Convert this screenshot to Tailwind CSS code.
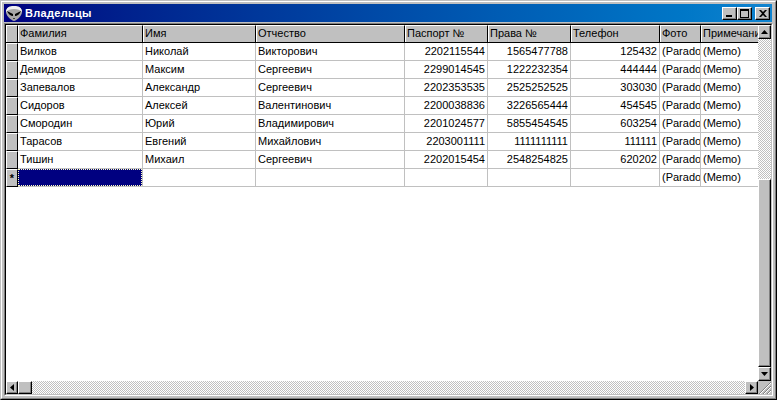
<!DOCTYPE html>
<html lang="ru">
<head>
  <meta charset="UTF-8"/>
  <title>Владельцы</title>
  <script src="https://cdn.jsdelivr.net/npm/@tailwindcss/browser@4"></script>
</head>
<body class="w-[777px] h-[400px] overflow-hidden bg-[#c0c0c0] font-['Liberation_Sans',sans-serif] text-[11px] leading-none text-black">
  <!-- window -->
  <div class="w-[777px] h-[400px] flex flex-col border border-t-[#c0c0c0] border-l-[#c0c0c0] border-r-black border-b-black">
    <div class="flex-1 min-h-0 flex flex-col border border-t-white border-l-white border-r-[#808080] border-b-[#808080] p-[2px]">
      <!-- title bar -->
      <div class="h-[18px] shrink-0 mr-[1px] flex items-center pl-[2px] pr-[2px] bg-gradient-to-r from-[#000080] to-[#1084d0]">
        <svg width="16" height="15" viewBox="0 0 16 15">
          <path d="M8 0C3 0 0 2 0 6c0 3 4 8 8 9 4-1 8-6 8-9 0-4-3-6-8-6z" fill="#a8a8a8"/>
          <path d="M8 0C3 0 0 2 0 6c2-2 4-3 8-3s6 1 8 3c0-4-3-6-8-6z" fill="#f0f0f0"/>
          <path d="M1 5l6 3v2C5 10 2 8 1 5zM15 5L9 8v2c2 0 5-2 6-5z" fill="#000"/>
          <path d="M7 12h2v1H7z" fill="#404040"/>
        </svg>
        <span class="ml-[3px] text-white font-bold text-[11px] tracking-[0.3px]">Владельцы</span>
        <div class="ml-auto flex">
          <button class="w-[15px] h-[13px] bg-[#c0c0c0] border border-t-white border-l-white border-r-black border-b-black shadow-[inset_-1px_-1px_0_#808080] flex items-end justify-start pl-[3px] pb-[2px]"><span class="block w-[6px] h-[2px] bg-black"></span></button>
          <button class="w-[15px] h-[13px] bg-[#c0c0c0] border border-t-white border-l-white border-r-black border-b-black shadow-[inset_-1px_-1px_0_#808080] flex items-center justify-center"><span class="block w-[9px] h-[9px] border border-black border-t-2"></span></button>
          <button class="ml-[3px] w-[15px] h-[13px] bg-[#c0c0c0] border border-t-white border-l-white border-r-black border-b-black shadow-[inset_-1px_-1px_0_#808080] flex items-center justify-center">
            <svg width="8" height="7" viewBox="0 0 8 7"><path d="M0 0h2l2 2 2-2h2L5 3.500 8 7H6L4 5 2 7H0l3-3.500z" fill="#000"/></svg>
          </button>
        </div>
      </div>
      <!-- grid area -->
      <div class="flex-1 min-h-0 mt-[1px] flex flex-col border border-t-[#808080] border-l-[#808080] border-r-white border-b-white">
        <div class="flex-1 min-h-0 flex flex-col border border-t-black border-l-black border-r-[#c0c0c0] border-b-[#c0c0c0]">
          <div class="flex-1 min-h-0 flex">
            <div id="table" class="flex-1 min-w-0 bg-white overflow-hidden">
              <div class="flex h-[18px] border-b border-black bg-[#c0c0c0]">
                <div class="w-[12px] shrink-0 border-r border-black border-t border-l border-t-white border-l-white"></div>
                <div class="w-[125px] shrink-0 border-r border-black border-t border-l border-t-white border-l-white pl-[1px] pt-[2px]">Фамилия</div>
                <div class="w-[113px] shrink-0 border-r border-black border-t border-l border-t-white border-l-white pl-[1px] pt-[2px]">Имя</div>
                <div class="w-[149px] shrink-0 border-r border-black border-t border-l border-t-white border-l-white pl-[1px] pt-[2px]">Отчество</div>
                <div class="w-[83px] shrink-0 border-r border-black border-t border-l border-t-white border-l-white pl-[1px] pt-[2px]">Паспорт №</div>
                <div class="w-[83px] shrink-0 border-r border-black border-t border-l border-t-white border-l-white pl-[1px] pt-[2px]">Права №</div>
                <div class="w-[89px] shrink-0 border-r border-black border-t border-l border-t-white border-l-white pl-[1px] pt-[2px]">Телефон</div>
                <div class="w-[41px] shrink-0 border-r border-black border-t border-l border-t-white border-l-white pl-[1px] pt-[2px]">Фото</div>
                <div class="flex-1 min-w-0 overflow-hidden whitespace-nowrap border-t border-l border-t-white border-l-white pl-[1px] pt-[2px]">Примечание</div>
              </div>
              <div id="rows"></div>
            </div>
            <!-- vertical scrollbar -->
            <div class="w-[13px] shrink-0 flex flex-col bg-[conic-gradient(#c0c0c0_25%,#fff_0_50%,#c0c0c0_0_75%,#fff_0)] bg-[length:2px_2px]">
              <button class="h-[14px] shrink-0 bg-[#c0c0c0] border border-t-white border-l-white border-r-black border-b-black shadow-[inset_-1px_-1px_0_#808080] flex items-center justify-center"><svg width="7" height="4" viewBox="0 0 7 4"><path d="M3.500 0L7 4H0z"/></svg></button>
              <div class="h-[140px] shrink-0"></div>
              <div class="h-[188px] shrink-0 bg-[#c0c0c0] border border-t-white border-l-white border-r-black border-b-black shadow-[inset_-1px_-1px_0_#808080]"></div>
              <div class="flex-1"></div>
              <button class="h-[14px] shrink-0 bg-[#c0c0c0] border border-t-white border-l-white border-r-black border-b-black shadow-[inset_-1px_-1px_0_#808080] flex items-center justify-center"><svg width="7" height="4" viewBox="0 0 7 4"><path d="M0 0h7L3.500 4z"/></svg></button>
            </div>
          </div>
          <!-- horizontal scrollbar -->
          <div class="h-[13px] shrink-0 flex bg-[conic-gradient(#c0c0c0_25%,#fff_0_50%,#c0c0c0_0_75%,#fff_0)] bg-[length:2px_2px]">
            <button class="w-[12px] shrink-0 bg-[#c0c0c0] border border-t-white border-l-white border-r-black border-b-black shadow-[inset_-1px_-1px_0_#808080] flex items-center justify-center"><svg width="4" height="7" viewBox="0 0 4 7"><path d="M4 0v7L0 3.500z"/></svg></button>
            <div class="w-[14px] shrink-0 bg-[#c0c0c0] border border-t-white border-l-white border-r-black border-b-black shadow-[inset_-1px_-1px_0_#808080]"></div>
            <div class="flex-1"></div>
            <button class="w-[13px] shrink-0 bg-[#c0c0c0] border border-t-white border-l-white border-r-black border-b-black shadow-[inset_-1px_-1px_0_#808080] flex items-center justify-center"><svg width="4" height="7" viewBox="0 0 4 7"><path d="M0 0v7l4-3.500z"/></svg></button>
            <div class="w-[13px] shrink-0 bg-[#c0c0c0] flex items-end justify-end">
              <svg width="12" height="12" viewBox="0 0 12 12" stroke-width="1"><path d="M0 12L12 0M4 12l8-8M8 12l4-4" stroke="#808080" fill="none"/><path d="M1 12L12 1M5 12l7-7M9 12l3-3" stroke="#fff" fill="none"/></svg>
            </div>
          </div>
        </div>
      </div>
    </div>
  </div>

  <script>
  const owners = [
    ['Вилков', 'Николай', 'Викторович', '2202115544', '1565477788', '125432'],
    ['Демидов', 'Максим', 'Сергеевич', '2299014545', '1222232354', '444444'],
    ['Запевалов', 'Александр', 'Сергеевич', '2202353535', '2525252525', '303030'],
    ['Сидоров', 'Алексей', 'Валентинович', '2200038836', '3226565444', '454545'],
    ['Смородин', 'Юрий', 'Владимирович', '2201024577', '5855454545', '603254'],
    ['Тарасов', 'Евгений', 'Михайлович', '2203001111', '1111111111', '111111'],
    ['Тишин', 'Михаил', 'Сергеевич', '2202015454', '2548254825', '620202'],
    ['', '', '', '', '', '']
  ];

  const cell = 'shrink-0 overflow-hidden whitespace-nowrap border-r border-b border-[#c0c0c0] pt-[3px] ';
  const widths = ['w-[125px]', 'w-[113px]', 'w-[149px]', 'w-[83px]', 'w-[83px]', 'w-[89px]'];

  // rows: indicator, six data cells, then the two blob columns
  document.getElementById('rows').innerHTML = owners.map((row, i) => {
    const isNew = i === owners.length - 1;
    const cells = row.map((text, c) => {
      const align = c >= 3 ? 'text-right pr-[2px]' : 'pl-[2px]';
      if (isNew && c === 0) {
        return `<div class="${widths[c]} shrink-0 border-r border-b border-[#c0c0c0]"><div class="h-full bg-[#000080] outline-1 -outline-offset-1 outline-dotted outline-[#ffffc0]"></div></div>`;
      }
      return `<div class="${cell}${widths[c]} ${align}">${text}</div>`;
    }).join('');
    return `<div class="flex h-[18px]">
      <div class="w-[12px] shrink-0 bg-[#c0c0c0] border-r border-b border-black border-t border-l border-t-white border-l-white text-center pt-[3px] font-bold">${isNew ? '*' : ''}</div>
      ${cells}
      <div class="${cell}w-[41px] pl-[2px]">(Parado</div>
      <div class="flex-1 min-w-0 overflow-hidden whitespace-nowrap border-b border-[#c0c0c0] pt-[3px] pl-[2px]">(Memo)</div>
    </div>`;
  }).join('');
  </script>
</body>
</html>
